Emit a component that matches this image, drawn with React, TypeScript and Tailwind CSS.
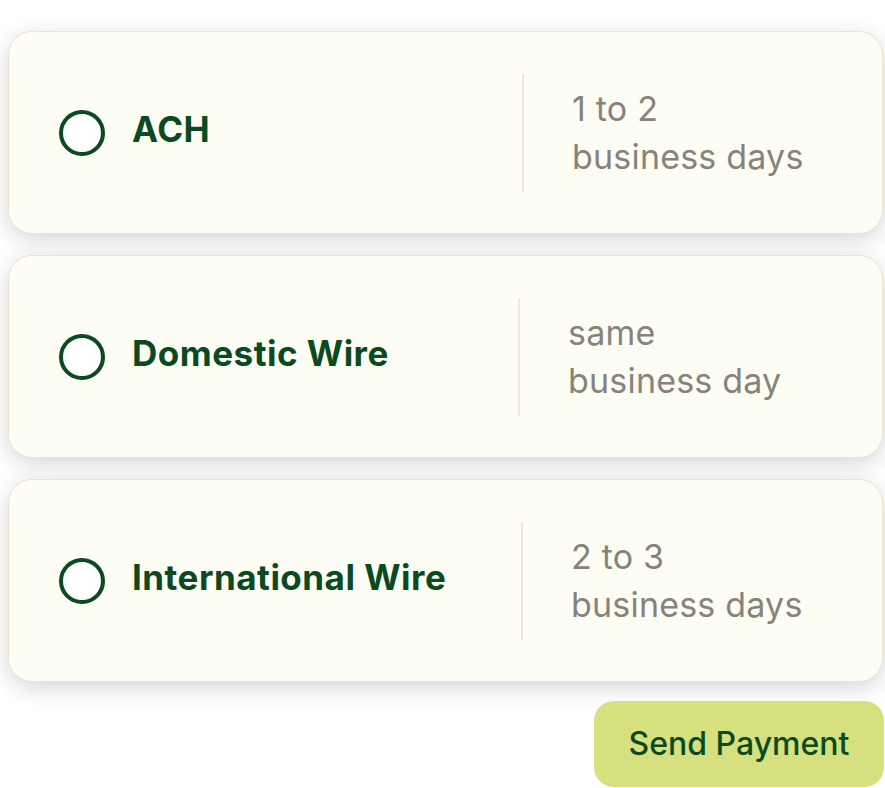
import React from 'react';

const options = [
  { label: 'ACH', top: '1 to 2', bottom: 'business days', left: 'w-[513px]' },
  { label: 'Domestic Wire', top: 'same', bottom: 'business day', left: 'w-[509px]' },
  { label: 'International Wire', top: '2 to 3', bottom: 'business days', left: 'w-[512px]' },
];

export default function App() {
  return (
    <div
      className="h-[788px] w-[885px] overflow-hidden bg-white"
      style={{ fontFamily: 'Inter, "Noto Sans", sans-serif' }}
    >
      <div className="ml-2 flex w-[875px] flex-col gap-[21px] pt-[31px]">
        {options.map((o) => (
          <label
            key={o.label}
            className="flex h-[203px] items-center rounded-[24px] border border-[#ebe4cb] bg-[#fefdf4] shadow-[0_6px_22px_rgba(0,0,0,0.16)]"
          >
            <div className={`flex ${o.left} items-center gap-[27px] pl-[50px]`}>
              <span className="h-[46px] w-[46px] shrink-0 rounded-full border-[4px] border-[#0a4a20] bg-white" />
              <span className="pb-[7px] text-[35px] font-bold tracking-[0.5px] text-[#0a4a20]">{o.label}</span>
            </div>
            <div className="h-[118px] w-[2px] bg-[#efe8d6]" />
            <div className="pl-[48px] text-[34px] leading-[48px] tracking-[0.2px] text-[#85837c]">
              <div>{o.top}</div>
              <div>{o.bottom}</div>
            </div>
          </label>
        ))}
      </div>
      <div className="mt-[19px] flex justify-end pr-px">
        <button className="h-[86px] w-[290px] rounded-[20px] bg-[#d6e07e] text-[32px] font-medium text-[#0a4a20]">
          Send Payment
        </button>
      </div>
    </div>
  );
}
